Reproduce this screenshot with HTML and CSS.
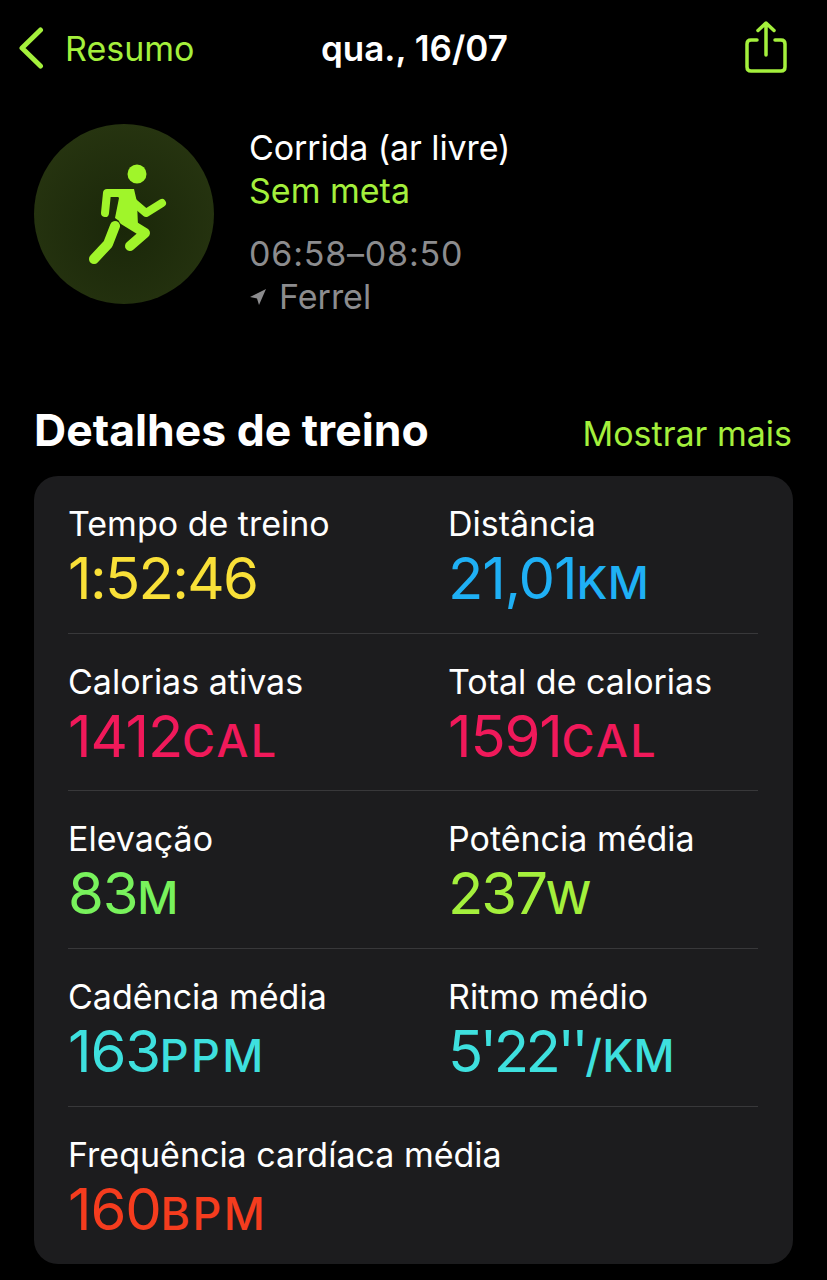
FILE: index.html
```html
<!DOCTYPE html>
<html lang="pt">
<head>
    <meta charset="UTF-8">
    <meta name="viewport" content="width=device-width, initial-scale=1.0">
    <title>Corrida (ar livre)</title>
    <link rel="stylesheet" href="styles.css">
</head>
<body>

    <!-- Top bar -->
    <header class="topbar">
        <div class="back">
            <svg class="back-icon" width="26" height="42" viewBox="0 0 26 42"><path d="M21.5 3 L3 21 L21.5 39"/></svg>
            <span>Resumo</span>
        </div>
        <div class="date">qua., 16/07</div>
        <svg class="share-icon" width="44" height="52" viewBox="0 0 44 52">
            <path d="M13 19 H7 Q3 19 3 23 V46 Q3 50 7 50 H37 Q41 50 41 46 V23 Q41 19 37 19 H31"/>
            <path d="M22 34 V2 M14 9.5 L22 2 L30 9.5"/>
        </svg>
    </header>

    <!-- Workout summary -->
    <section class="summary">
        <div class="badge">
            <svg width="88" height="108" viewBox="-8 0 88 108">
                <circle cx="49" cy="14" r="9.5" class="fig"/>
                <path class="limb leg" d="M6 99 L20 84 L27 66"/>
                <path class="limb leg" d="M42 86 L57 73 L36 60"/>
                <path class="limb" d="M17 53 L19 33 H42"/>
                <path class="limb" d="M44 41 L58 53 L74 43"/>
                <path class="fig" d="M24 29 H46 L49 42 L50 66 L38 66 L27 58 L31 38 Z"/>
            </svg>
        </div>
        <div class="summary-text">
            <div class="sport">Corrida (ar livre)</div>
            <div class="goal">Sem meta</div>
            <div class="time">06:58–08:50</div>
            <div class="place">
                <svg width="18" height="18" viewBox="0 0 18 18"><path d="M17 1 L1 9 L8 10.5 L10 17 Z"/></svg>
                <span>Ferrel</span>
            </div>
        </div>
    </section>

    <!-- Details -->
    <section class="details">
        <div class="details-head">
            <h2>Detalhes de treino</h2>
            <span class="more">Mostrar mais</span>
        </div>
        <div class="card">
            <div class="row">
                <div class="stat">
                    <div class="label">Tempo de treino</div>
                    <div class="value yellow">1:52:46</div>
                </div>
                <div class="stat">
                    <div class="label">Distância</div>
                    <div class="value blue">21,01<small>KM</small></div>
                </div>
            </div>
            <div class="row">
                <div class="stat">
                    <div class="label">Calorias ativas</div>
                    <div class="value pink">1412<small>CAL</small></div>
                </div>
                <div class="stat">
                    <div class="label">Total de calorias</div>
                    <div class="value pink">1591<small>CAL</small></div>
                </div>
            </div>
            <div class="row">
                <div class="stat">
                    <div class="label">Elevação</div>
                    <div class="value green">83<small>M</small></div>
                </div>
                <div class="stat">
                    <div class="label">Potência média</div>
                    <div class="value lime">237<small>W</small></div>
                </div>
            </div>
            <div class="row">
                <div class="stat">
                    <div class="label">Cadência média</div>
                    <div class="value cyan">163<small>PPM</small></div>
                </div>
                <div class="stat">
                    <div class="label">Ritmo médio</div>
                    <div class="value cyan"><span class="pace">5'22''</span><small class="unit-tight">/KM</small></div>
                </div>
            </div>
            <div class="row">
                <div class="stat wide">
                    <div class="label">Frequência cardíaca média</div>
                    <div class="value red">160<small>BPM</small></div>
                </div>
            </div>
        </div>
    </section>

</body>
</html>
```

FILE: styles.css
```css
* {
    margin: 0;
    padding: 0;
    box-sizing: border-box;
}

body {
    width: 827px;
    height: 1280px;
    overflow: hidden;
    background: #000;
    color: #fff;
    font-family: Inter, "Liberation Sans", sans-serif;
}

/* Top bar */
.topbar {
    position: relative;
    height: 124px;
    padding: 21px 39px 0 19px;
    display: flex;
    justify-content: space-between;
    align-items: flex-start;
}

.back {
    display: flex;
    align-items: center;
    gap: 20px;
    height: 54px;
    color: #a4f03c;
    font-size: 34px;
}

.back-icon path {
    fill: none;
    stroke: #a4f03c;
    stroke-width: 5;
    stroke-linecap: round;
    stroke-linejoin: round;
}

.date {
    position: absolute;
    left: 321px;
    top: 21px;
    height: 54px;
    line-height: 54px;
    font-size: 35px;
    font-weight: 600;
}

.share-icon path {
    fill: none;
    stroke: #a4f03c;
    stroke-width: 3.5;
    stroke-linecap: round;
    stroke-linejoin: round;
}

/* Workout summary */
.summary {
    display: flex;
    gap: 35px;
    padding-left: 34px;
}

.badge {
    width: 180px;
    height: 180px;
    flex-shrink: 0;
    border-radius: 50%;
    background: radial-gradient(circle at 50% 58%, #1a2709, #2a3812);
    display: flex;
    align-items: center;
    justify-content: center;
}

.fig {
    fill: #a0f52a;
}

.limb {
    fill: none;
    stroke: #a0f52a;
    stroke-width: 8;
    stroke-linecap: round;
    stroke-linejoin: round;
}

.leg {
    stroke-width: 10;
}

.summary-text {
    font-size: 34px;
    line-height: 43px;
    padding-top: 2px;
}

.sport {
    letter-spacing: -0.1px;
}

.goal {
    color: #a4f03c;
}

.time {
    color: #8c8c8e;
    letter-spacing: 0.8px;
    margin-top: 20px;
}

.place {
    color: #8c8c8e;
    display: flex;
    align-items: center;
    gap: 12px;
}

.place svg {
    fill: #8c8c8e;
}

/* Details */
.details {
    padding: 0 34px;
    margin-top: 82px;
}

.details-head {
    display: flex;
    justify-content: space-between;
    align-items: baseline;
    height: 60px;
    line-height: 60px;
    margin-bottom: 16px;
}

.details-head h2 {
    font-size: 44.5px;
    font-weight: 700;
}

.more {
    color: #a4f03c;
    font-size: 34px;
    margin-right: 1px;
}

.card {
    width: 759px;
    height: 788px;
    border-radius: 24px;
    background: #1c1c1e;
    padding: 0 35px 0 34px;
}

.row {
    display: grid;
    grid-template-columns: 380px 1fr;
    height: 157.7px;
    padding-top: 26px;
    border-bottom: 1px solid #38383a;
}

.row:last-child {
    border-bottom: none;
}

.wide {
    grid-column: 1 / -1;
}

.label {
    font-size: 34px;
    line-height: 44px;
}

.value {
    font-size: 58px;
    line-height: 64px;
    letter-spacing: -1.2px;
}

.value small {
    font-size: 45px;
    font-weight: 500;
    letter-spacing: 2.4px;
}

.blue small,
.value .unit-tight {
    letter-spacing: 0.4px;
}

.pace {
    letter-spacing: -3.5px;
}

.yellow { color: #f9e038; letter-spacing: -1.7px; }
.blue { color: #1fb0f5; }
.pink { color: #f0195a; }
.green { color: #78f25c; }
.lime { color: #a4f03c; letter-spacing: -2px; }
.cyan { color: #3ee0de; }
.red { color: #f53c1e; }
```
